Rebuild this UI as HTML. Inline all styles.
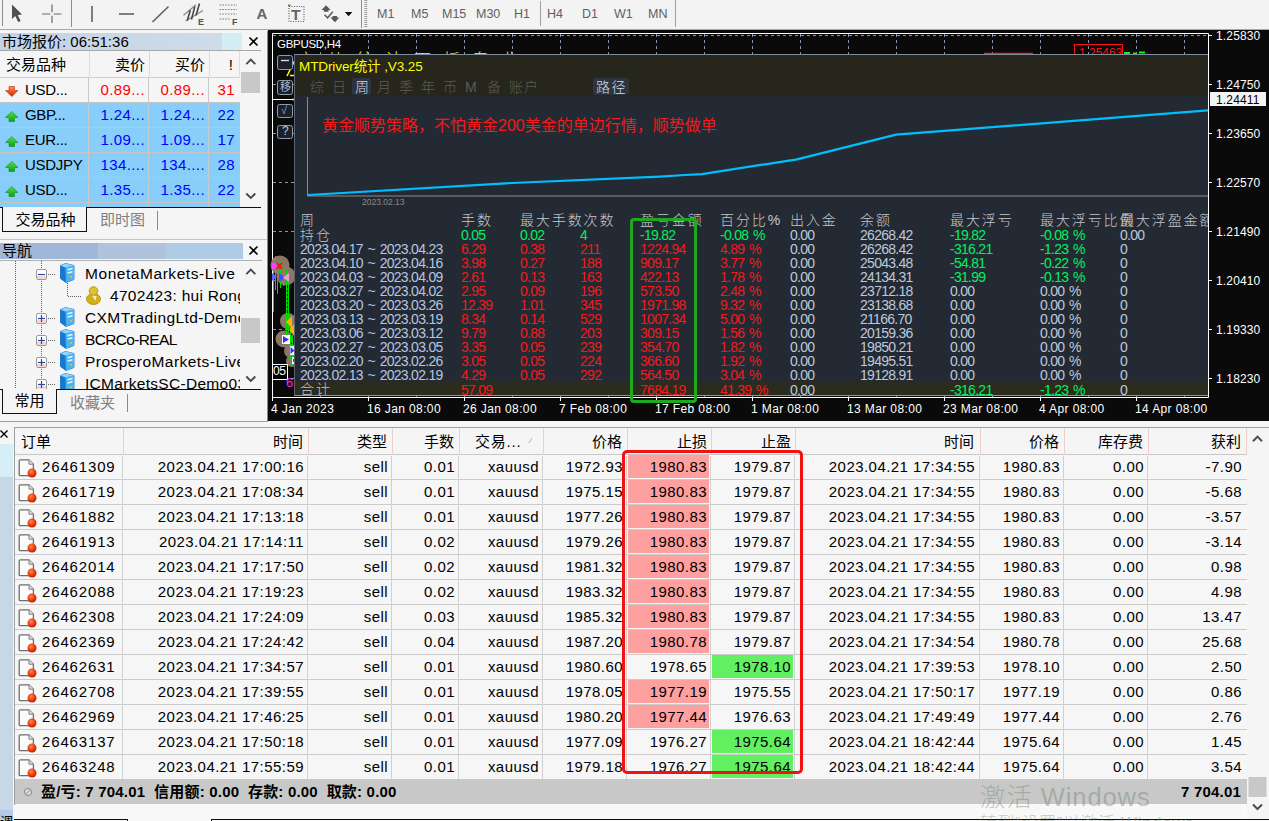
<!DOCTYPE html>
<html lang="zh-CN">
<head>
<meta charset="utf-8">
<title>MT4</title>
<style>
*{box-sizing:border-box;margin:0;padding:0}
html,body{width:1269px;height:821px;overflow:hidden;background:#f3f3f3}
body{position:relative;font-family:"Liberation Sans","Noto Sans CJK SC",sans-serif;font-size:15px;color:#000}
.abs{position:absolute}
#root{position:absolute;left:0;top:0;width:1269px;height:821px;overflow:hidden;background:#f3f3f3}
/* toolbar */
#tb{position:absolute;left:0;top:0;width:1269px;height:30px;background:#f3f3f3;border-bottom:1px solid #a8a8a8}
#tb .sep{position:absolute;top:0;width:1px;height:27px;background:#8c8c8c}
#tb .tf{position:absolute;top:6px;font-size:12.500px;color:#606060;letter-spacing:0;line-height:16px}
/* left panels */
.ptitle{position:absolute;left:0;height:17px;font-size:15px;line-height:17px;padding-left:2px;white-space:nowrap;overflow:hidden}
.px{position:absolute;font-size:17px;line-height:17px;color:#000}
/* market watch */
#mw{position:absolute;left:0;top:51px;width:240px;height:156px;background:#f5f5f5;overflow:hidden}
#mw .r{position:absolute;left:0;width:240px;height:25px;line-height:24px;white-space:nowrap;letter-spacing:.4px}
#mw .r span{position:absolute;top:0;height:25px}
#mw .hd span{font-size:15px;letter-spacing:0}
#mw .c1{left:25px;letter-spacing:-.3px}
#mw .c2{left:90px;width:59px;text-align:right;padding-right:4px}
#mw .c3{left:150px;width:59px;text-align:right;padding-right:4px}
#mw .c4{left:210px;width:30px;text-align:right;padding-right:5px}
#mw .blue{background:#87cefa;color:#0000ff}
#mw .blue .c1{color:#000}
#mw .red{color:#ff0000}
#mw .red .c1{color:#000}
#mw .vl{position:absolute;top:27px;width:1px;height:130px;background:#c8c8c8}
#mw .hl{position:absolute;left:0;width:240px;height:1px;background:#c4c4c4}
/* terminal table */
#tt{position:absolute;left:14px;top:427px;width:1233px;height:378px;background:#f6f6f6;overflow:hidden;border-left:1px solid #a0a0a0;border-top:1px solid #a0a0a0}
#tt .row{position:absolute;left:0;width:1233px;height:25px;line-height:24px;border-bottom:1px solid #cbcbcb;white-space:nowrap;letter-spacing:.45px}
#tt .row span{position:absolute;top:0;height:24px;text-align:right;padding-right:4px}
#tt .row.odd{background:#f6f6f6}
#tt .hdr{background:#f5f5f5;height:27px;line-height:26px;border-bottom:1px solid #c8c8c8;letter-spacing:0}
#tt .hdr span{top:1px}
#tt .vl{position:absolute;top:28px;width:1px;height:325px;background:#d0d0d0}
#tt .hvl{position:absolute;top:0;width:1px;height:27px;background:#f0cfc8}
</style>
</head>
<body>
<div id="root">

<!-- ============ TOOLBAR ============ -->
<div id="tb">
  <div class="sep" style="left:2px;height:26px"></div>
  <svg class="abs" style="left:0;top:0" width="375" height="29" viewBox="0 0 375 29">
    <!-- cursor -->
    <path d="M12 4.5 L12 19 L15.3 16 L18.2 22 L20.6 20.9 L17.8 15 L22 14.6 Z" fill="#505050"/>
    <!-- crosshair -->
    <path d="M52 4.5V12.3M52 15.7V23M42 14H50.3M53.7 14H61.5" stroke="#6a6a6a" stroke-width="1.2" fill="none"/>
    <!-- vline -->
    <path d="M92 6V22" stroke="#606060" stroke-width="1.6"/>
    <!-- hline -->
    <path d="M119 14H134" stroke="#606060" stroke-width="1.6"/>
    <!-- diag -->
    <path d="M152.5 22L168.5 6.5" stroke="#606060" stroke-width="1.6"/>
    <!-- channel -->
    <g fill="none">
      <path d="M183.500 15.200L196 4.800 M185.500 21L203 10.500" stroke="#8a8a8a" stroke-width="1.300"/>
      <path d="M187.300 20.500L190.300 10.200 M191.500 19.500L194.800 6.500 M196 15.500L199.500 3.500" stroke="#484848" stroke-width="1.600"/>
    </g>
    <!-- fibo -->
    <g stroke="#808080" stroke-width="1.2" stroke-dasharray="1.6 1.2" fill="none">
      <path d="M219.500 5H237 M219.500 9.500H237 M219.500 14H237 M219.500 19H231"/>
    </g>
    <!-- T box -->
    <rect x="289" y="6.5" width="15" height="15" fill="none" stroke="#606060" stroke-width="1.2" stroke-dasharray="1.1 1.4"/><rect x="288" y="4.5" width="2.5" height="2" fill="#707070"/>
    <!-- arrows icon -->
    <path d="M326 5.200L330.600 10H328.500V11.800H323.800V10H321.500Z M334.900 22.200L339.400 17.500H337V16H332.500V17.500H330.400Z" fill="#585858"/>
    <path d="M324.5 14.8L327.6 17.8L332.8 11.8" stroke="#585858" stroke-width="1.5" fill="none"/>
    <!-- dropdown -->
    <path d="M344.800 12H352.400L348.600 16.200Z" fill="#111"/>
    <!-- gripper -->
    <path d="M365.800 0V27" stroke="#9a9a9a" stroke-width="3" stroke-dasharray="1 1"/>
  </svg>
  <span class="abs" style="left:198px;top:16.500px;font-size:9px;font-weight:bold;color:#505050;line-height:10px">E</span>
  <span class="abs" style="left:232px;top:16.500px;font-size:9px;font-weight:bold;color:#505050;line-height:10px">F</span>
  <span class="abs" style="left:256.500px;top:6px;font-size:15px;font-weight:bold;color:#666;line-height:16px">A</span>
  <span class="abs" style="left:290.500px;top:7px;font-size:14.500px;font-weight:bold;color:#666;line-height:16px;transform:scaleX(1.08);transform-origin:left">T</span>
  <div class="sep" style="left:71px"></div>
  <div class="sep" style="left:361px;height:28px"></div>
  <span class="tf" style="left:377px">M1</span>
  <span class="tf" style="left:411px">M5</span>
  <span class="tf" style="left:442px">M15</span>
  <span class="tf" style="left:476px">M30</span>
  <span class="tf" style="left:514px">H1</span>
  <div class="sep" style="left:540px;top:1px;height:25px;background:#a0a0a0"></div>
  <span class="tf" style="left:547px">H4</span>
  <span class="tf" style="left:582px">D1</span>
  <span class="tf" style="left:614px">W1</span>
  <span class="tf" style="left:648px">MN</span>
  <div class="sep" style="left:675px;background:#a0a0a0"></div>
</div>


<!-- ============ MARKET WATCH ============ -->
<div class="abs" style="left:0;top:31px;width:267px;height:391px;background:#f5f5f5"></div>
<div class="ptitle" style="top:33px;width:222px;background:linear-gradient(90deg,#c3d3e4,#cfdbe8)">市场报价: 06:51:36</div>
<div class="abs" style="left:222px;top:33px;width:20px;height:17px;background:#d5eef4"></div>
<svg class="abs" style="left:248px;top:36px" width="11" height="11"><path d="M1.500 1.500L9.500 9.500M9.500 1.500L1.500 9.500" stroke="#000" stroke-width="1.6"/></svg>
<div class="abs" style="left:0;top:50px;width:261px;height:1px;background:#a8a8a8"></div>
<div id="mw">
  <div class="r hd" style="top:0;height:27px;line-height:27px"><span style="left:6px">交易品种</span><span class="c2">卖价</span><span class="c3">买价</span><span class="c4" style="padding-right:7px">!</span></div>
  <div class="r red" style="top:27px"><span class="c1">USD...</span><span class="c2">0.89...</span><span class="c3">0.89...</span><span class="c4">31</span></div>
  <div class="r blue" style="top:52px"><span class="c1">GBP...</span><span class="c2">1.24...</span><span class="c3">1.24...</span><span class="c4">22</span></div>
  <div class="r blue" style="top:77px"><span class="c1">EUR...</span><span class="c2">1.09...</span><span class="c3">1.09...</span><span class="c4">17</span></div>
  <div class="r blue" style="top:102px"><span class="c1">USDJPY</span><span class="c2">134....</span><span class="c3">134....</span><span class="c4">28</span></div>
  <div class="r blue" style="top:127px"><span class="c1">USD...</span><span class="c2">1.35...</span><span class="c3">1.35...</span><span class="c4">22</span></div>
  <div class="r blue" style="top:152px"></div>
  <div class="hl" style="top:51px"></div><div class="hl" style="top:76px"></div><div class="hl" style="top:101px"></div><div class="hl" style="top:126px"></div><div class="hl" style="top:151px"></div>
  <div class="hl" style="top:26px;background:#cfcfcf"></div>
  <div class="vl" style="left:88px"></div><div class="vl" style="left:148px"></div><div class="vl" style="left:208px"></div>
  <div class="vl" style="left:89px;top:0;height:27px;background:#f3d3cc"></div><div class="vl" style="left:149px;top:0;height:27px;background:#f3d3cc"></div><div class="vl" style="left:209px;top:0;height:27px;background:#f3d3cc"></div><div class="vl" style="left:239px;top:0;height:27px;background:#f3d3cc"></div>
  <svg class="abs" style="left:0;top:27px" width="24" height="130" viewBox="0 0 24 130">
    <defs>
      <linearGradient id="gr" x1="0" y1="0" x2="0" y2="1"><stop offset="0" stop-color="#ff8a50"/><stop offset="1" stop-color="#d02800"/></linearGradient>
      <linearGradient id="gg" x1="0" y1="0" x2="0" y2="1"><stop offset="0" stop-color="#50e050"/><stop offset="1" stop-color="#10a010"/></linearGradient>
    </defs>
    <path d="M9 8.500H14.500V12.500H18L11.800 18.500L5.500 12.500H9Z" fill="url(#gr)" stroke="#c03010" stroke-width=".6"/>
    <g fill="url(#gg)" stroke="#109010" stroke-width=".6">
      <path d="M11.800 33.5L18 39.5H14.500V43.5H9V39.5H5.500Z"/>
      <path d="M11.800 58.5L18 64.5H14.500V68.5H9V64.5H5.500Z"/>
      <path d="M11.800 83.5L18 89.5H14.500V93.5H9V89.5H5.500Z"/>
      <path d="M11.800 108.5L18 114.5H14.500V118.5H9V114.5H5.500Z"/>
    </g>
  </svg>
</div>
<!-- mw scrollbar -->
<svg class="abs" style="left:241px;top:51px" width="20" height="155" viewBox="0 0 20 155">
  <path d="M5.300 13.200L9.800 8.700L14.300 13.200" stroke="#484850" stroke-width="1.900" fill="none"/>
  <rect x="0" y="21" width="19" height="21" fill="#c8c8c8"/>
  <path d="M5.300 142.500L9.800 147L14.300 142.500" stroke="#484850" stroke-width="1.900" fill="none"/>
</svg>
<!-- mw tabs -->
<div class="abs" style="left:0;top:207px;width:261px;height:1px;background:#101010"></div>
<div class="abs" style="left:2px;top:207px;width:85px;height:25px;border:1px solid #101010;border-top:none;background:#f5f5f5;font-size:15px;line-height:25px;text-align:center;padding-left:2px">交易品种</div>
<div class="abs" style="left:100px;top:208px;font-size:15px;line-height:24px;color:#808080">即时图</div>
<div class="abs" style="left:157px;top:211px;width:1px;height:19px;background:#8a8a8a"></div>
<div class="abs" style="left:0;top:239px;width:267px;height:1px;background:#c6c6c6"></div>

<!-- ============ NAVIGATOR ============ -->
<div class="ptitle" style="top:243px;width:98px;height:16px;line-height:16px;background:#9fb8d8">导航</div>
<div class="abs" style="left:98px;top:243px;width:68px;height:16px;background:#afc3dd"></div>
<div class="abs" style="left:166px;top:243px;width:77px;height:16px;background:#b0cbe6"></div>
<svg class="abs" style="left:248px;top:245px" width="11" height="11"><path d="M1.500 1.500L9.500 9.500M9.500 1.500L1.500 9.500" stroke="#000" stroke-width="1.6"/></svg>
<div class="abs" style="left:0;top:260px;width:262px;height:1px;background:#b0b0b0"></div>
<div id="nav" class="abs" style="left:0;top:261px;width:240px;height:128px;overflow:hidden;background:#f5f5f5">
<svg class="abs" style="left:0;top:0" width="241" height="128" viewBox="0 0 241 128"><g stroke="#606060" stroke-width="1" stroke-dasharray="1 1" fill="none"><path d="M15.500 0V128"/><path d="M41.500 0V128"/><path d="M48 13.5H56"/><path d="M48 57.5H56"/><path d="M48 79.5H56"/><path d="M48 101.5H56"/><path d="M48 123.5H56"/><path d="M67.500 22V35.500H82"/></g><rect x="36.5" y="8.5" width="10" height="10" rx="1.500" fill="#fff" stroke="#9a9a9a" stroke-width="1"/><rect x="37.0" y="15.0" width="9" height="3" fill="#f6d4d0"/><path d="M38 13.5H45" stroke="#2848a0" stroke-width="1.200"/><g transform="translate(60,2)">
<path d="M0.500 2.500L5.500 0.500L14 2.500L14 16.500L6 19.500L0.500 15.500Z" fill="#2a8fe0" stroke="#1a6fc0" stroke-width=".8"/>
<path d="M0.500 2.500L5.500 4.500L6 19.500L0.500 15.500Z" fill="#1878d0"/>
<path d="M5.500 4.500L14 2.500L14 16.500L6 19.500Z" fill="#45b5f5"/>
<path d="M0.500 2.500L5.500 0.500L14 2.500L5.500 4.500Z" fill="#8fd4fa"/>
<path d="M7.500 6.800L12.500 5.600M7.500 10L12.500 8.800" stroke="#e8f6ff" stroke-width="1.500"/>
<rect x="10" y="13" width="1.800" height="1.800" fill="#f0c020"/>
</g><rect x="36.5" y="52.5" width="10" height="10" rx="1.500" fill="#fff" stroke="#9a9a9a" stroke-width="1"/><rect x="37.0" y="59.0" width="9" height="3" fill="#f6d4d0"/><path d="M38 57.5H45" stroke="#2848a0" stroke-width="1.200"/><path d="M41.5 54V61" stroke="#2848a0" stroke-width="1.200"/><g transform="translate(60,46)">
<path d="M0.500 2.500L5.500 0.500L14 2.500L14 16.500L6 19.500L0.500 15.500Z" fill="#2a8fe0" stroke="#1a6fc0" stroke-width=".8"/>
<path d="M0.500 2.500L5.500 4.500L6 19.500L0.500 15.500Z" fill="#1878d0"/>
<path d="M5.500 4.500L14 2.500L14 16.500L6 19.500Z" fill="#45b5f5"/>
<path d="M0.500 2.500L5.500 0.500L14 2.500L5.500 4.500Z" fill="#8fd4fa"/>
<path d="M7.500 6.800L12.500 5.600M7.500 10L12.500 8.800" stroke="#e8f6ff" stroke-width="1.500"/>
<rect x="10" y="13" width="1.800" height="1.800" fill="#f0c020"/>
</g><rect x="36.5" y="74.5" width="10" height="10" rx="1.500" fill="#fff" stroke="#9a9a9a" stroke-width="1"/><rect x="37.0" y="81.0" width="9" height="3" fill="#f6d4d0"/><path d="M38 79.5H45" stroke="#2848a0" stroke-width="1.200"/><path d="M41.5 76V83" stroke="#2848a0" stroke-width="1.200"/><g transform="translate(60,68)">
<path d="M0.500 2.500L5.500 0.500L14 2.500L14 16.500L6 19.500L0.500 15.500Z" fill="#2a8fe0" stroke="#1a6fc0" stroke-width=".8"/>
<path d="M0.500 2.500L5.500 4.500L6 19.500L0.500 15.500Z" fill="#1878d0"/>
<path d="M5.500 4.500L14 2.500L14 16.500L6 19.500Z" fill="#45b5f5"/>
<path d="M0.500 2.500L5.500 0.500L14 2.500L5.500 4.500Z" fill="#8fd4fa"/>
<path d="M7.500 6.800L12.500 5.600M7.500 10L12.500 8.800" stroke="#e8f6ff" stroke-width="1.500"/>
<rect x="10" y="13" width="1.800" height="1.800" fill="#f0c020"/>
</g><rect x="36.5" y="96.5" width="10" height="10" rx="1.500" fill="#fff" stroke="#9a9a9a" stroke-width="1"/><rect x="37.0" y="103.0" width="9" height="3" fill="#f6d4d0"/><path d="M38 101.5H45" stroke="#2848a0" stroke-width="1.200"/><path d="M41.5 98V105" stroke="#2848a0" stroke-width="1.200"/><g transform="translate(60,90)">
<path d="M0.500 2.500L5.500 0.500L14 2.500L14 16.500L6 19.500L0.500 15.500Z" fill="#2a8fe0" stroke="#1a6fc0" stroke-width=".8"/>
<path d="M0.500 2.500L5.500 4.500L6 19.500L0.500 15.500Z" fill="#1878d0"/>
<path d="M5.500 4.500L14 2.500L14 16.500L6 19.500Z" fill="#45b5f5"/>
<path d="M0.500 2.500L5.500 0.500L14 2.500L5.500 4.500Z" fill="#8fd4fa"/>
<path d="M7.500 6.800L12.500 5.600M7.500 10L12.500 8.800" stroke="#e8f6ff" stroke-width="1.500"/>
<rect x="10" y="13" width="1.800" height="1.800" fill="#f0c020"/>
</g><rect x="36.5" y="118.5" width="10" height="10" rx="1.500" fill="#fff" stroke="#9a9a9a" stroke-width="1"/><rect x="37.0" y="125.0" width="9" height="3" fill="#f6d4d0"/><path d="M38 123.5H45" stroke="#2848a0" stroke-width="1.200"/><path d="M41.5 120V127" stroke="#2848a0" stroke-width="1.200"/><g transform="translate(60,112)">
<path d="M0.500 2.500L5.500 0.500L14 2.500L14 16.500L6 19.500L0.500 15.500Z" fill="#2a8fe0" stroke="#1a6fc0" stroke-width=".8"/>
<path d="M0.500 2.500L5.500 4.500L6 19.500L0.500 15.500Z" fill="#1878d0"/>
<path d="M5.500 4.500L14 2.500L14 16.500L6 19.500Z" fill="#45b5f5"/>
<path d="M0.500 2.500L5.500 0.500L14 2.500L5.500 4.500Z" fill="#8fd4fa"/>
<path d="M7.500 6.800L12.500 5.600M7.500 10L12.500 8.800" stroke="#e8f6ff" stroke-width="1.500"/>
<rect x="10" y="13" width="1.800" height="1.800" fill="#f0c020"/>
</g><g transform="translate(86,25)">
<ellipse cx="7.500" cy="13" rx="7" ry="5.500" fill="#d4b018" stroke="#a88a08" stroke-width=".8"/>
<circle cx="7.500" cy="5" r="4.300" fill="#e0c030" stroke="#a88a08" stroke-width=".8"/>
<path d="M6 9.500L9.500 15L10.500 10Z" fill="#f4ecd0"/>
</g></svg><div class="abs" style="left:85px;top:2px;height:22px;line-height:22px;font-size:15.500px;letter-spacing:.55px;white-space:nowrap">MonetaMarkets-Live</div><div class="abs" style="left:110px;top:24px;height:22px;line-height:22px;font-size:15.500px;letter-spacing:.3px;white-space:nowrap">4702423: hui Rong</div><div class="abs" style="left:85px;top:46px;height:22px;line-height:22px;font-size:15.500px;letter-spacing:.4px;white-space:nowrap">CXMTradingLtd-Demo</div><div class="abs" style="left:85px;top:68px;height:22px;line-height:22px;font-size:15.500px;letter-spacing:-.65px;white-space:nowrap">BCRCo-REAL</div><div class="abs" style="left:85px;top:90px;height:22px;line-height:22px;font-size:15.500px;letter-spacing:.45px;white-space:nowrap">ProsperoMarkets-Live</div><div class="abs" style="left:85px;top:112px;height:22px;line-height:22px;font-size:15.500px;letter-spacing:.3px;white-space:nowrap">ICMarketsSC-Demo03</div>
</div>
<svg class="abs" style="left:241px;top:261px" width="20" height="128" viewBox="0 0 20 128">
  <path d="M5.300 13.200L9.800 8.700L14.300 13.200" stroke="#484850" stroke-width="1.900" fill="none"/>
  <rect x="0" y="57" width="19" height="25" fill="#c8c8c8"/>
  <path d="M5.300 115.500L9.800 120L14.300 115.500" stroke="#484850" stroke-width="1.900" fill="none"/>
</svg>
<div class="abs" style="left:0;top:389px;width:261px;height:1px;background:#101010"></div>
<div class="abs" style="left:2px;top:389px;width:55px;height:25px;border:1px solid #101010;border-top:none;background:#f5f5f5;font-size:15px;line-height:24px;text-align:center">常用</div>
<div class="abs" style="left:70px;top:391px;font-size:15px;line-height:23px;color:#808080">收藏夹</div>
<div class="abs" style="left:127px;top:394px;width:1px;height:18px;background:#8a8a8a"></div>
<div class="abs" style="left:0;top:421px;width:268px;height:1px;background:#a0a0a0"></div>
<div class="abs" style="left:267px;top:31px;width:1px;height:390px;background:#8a8a8a"></div>

<!--LEFT-->
<div id="ch" class="abs" style="left:268px;top:30px;width:1001px;height:391px;background:#0a0a0a;overflow:hidden;font-family:'Liberation Sans','Noto Sans CJK SC',sans-serif">
<svg class="abs" style="left:0;top:0" width="1001" height="391" viewBox="268 30 1001 391"><g stroke="#8496a8" stroke-width="1" stroke-dasharray="3 3" fill="none"><path d="M320.5 34V397"/><path d="M368.5 34V397"/><path d="M416.5 34V397"/><path d="M464.5 34V397"/><path d="M512.5 34V397"/><path d="M560.5 34V397"/><path d="M608.5 34V397"/><path d="M656.5 34V397"/><path d="M704.5 34V397"/><path d="M752.5 34V397"/><path d="M800.5 34V397"/><path d="M848.5 34V397"/><path d="M896.5 34V397"/><path d="M944.5 34V397"/><path d="M992.5 34V397"/><path d="M1040.5 34V397"/><path d="M1088.5 34V397"/><path d="M1136.5 34V397"/><path d="M1184.5 34V397"/><path d="M273 35.5H1208"/><path d="M273 84.5H1208"/><path d="M273 133.5H1208"/><path d="M273 182.5H1208"/><path d="M273 231.5H1208"/><path d="M273 280.5H1208"/><path d="M273 329.5H1208"/><path d="M273 378.5H1208"/></g><path d="M272.5 33.5H1208.5V397.5H272.5Z" fill="none" stroke="#fff" stroke-width="1"/><g stroke="#fff" stroke-width="1"><path d="M1208 35.5H1212"/><path d="M1208 84.5H1212"/><path d="M1208 133.5H1212"/><path d="M1208 182.5H1212"/><path d="M1208 231.5H1212"/><path d="M1208 280.5H1212"/><path d="M1208 329.5H1212"/><path d="M1208 378.5H1212"/><path d="M272.5 397V401"/><path d="M368.5 397V401"/><path d="M464.5 397V401"/><path d="M560.5 397V401"/><path d="M656.5 397V401"/><path d="M752.5 397V401"/><path d="M848.5 397V401"/><path d="M944.5 397V401"/><path d="M1040.5 397V401"/><path d="M1136.5 397V401"/></g><path d="M272 99.500H294" stroke="#fff" stroke-width="1"/><path d="M290 75.500H300M292 99.500H300" stroke="#ffff00" stroke-width="1.500"/><path d="M287 76L296 58" stroke="#ffff00" stroke-width="1.500"/><g fill="#8a7866"><circle cx="280" cy="265" r="9.500"/><circle cx="286" cy="276" r="9.500"/><circle cx="288" cy="321" r="8"/><circle cx="284" cy="339" r="8.500"/><circle cx="291" cy="351" r="7"/><circle cx="292" cy="361" r="6"/></g><g stroke="#00e000" stroke-width="1"><path d="M273.500 258V312M275.500 256V290M277.500 262V294M280.500 262V288M283.500 268V286M286.500 270V335M288.500 280V332M290.500 325V360M292.500 335V365"/></g><path d="M287.500 288V312" stroke="#4040ff" stroke-width="1" stroke-dasharray="2 2"/><path d="M272 262L278 266L272 270Z" fill="#ff40ff"/><path d="M276 261L279 264L283 262L281 266L283 270L279 268L276 270L277.500 266Z" fill="#ff1010"/><path d="M279 273L285 277.500L279 282Z" fill="#4848ff"/><path d="M289 273L283 277.500L289 282Z" fill="#ff90e0"/><path d="M272 273L277 277L272 281Z" fill="#6060ff"/><path d="M292 316L286 322L292 328Z" fill="#ffb000"/><path d="M294 324L289 330L294 336Z" fill="#ffb000"/><rect x="282" y="335" width="8" height="9" fill="#fff"/><path d="M283 336L289 339.500L283 343Z" fill="#3030ff"/><rect x="290" y="346" width="5" height="9" fill="#fff"/><path d="M290.500 347L294.500 350.500L290.500 354Z" fill="#3030ff"/><rect x="292" y="357" width="3" height="7" fill="#fff"/><rect x="293" y="359" width="2" height="3" fill="#f00"/><rect x="272.500" y="364.500" width="15" height="15" fill="#000" stroke="#fff" stroke-width="1"/><path d="M984 53.500H1033" stroke="#ff2020" stroke-width="1.500"/><rect x="1074.500" y="44.500" width="48" height="14" fill="none" stroke="#ff1010" stroke-width="1"/><path d="M1124 53H1130M1133 53.500H1137M1139 52.500H1145" stroke="#00ff00" stroke-width="2"/><rect x="277.500" y="55.5" width="15" height="14" rx="2" fill="#1c2028" stroke="#8e9cb0" stroke-width="1"/><rect x="277.500" y="80.5" width="15" height="14" rx="2" fill="#1c2028" stroke="#8e9cb0" stroke-width="1"/><rect x="277.500" y="104.5" width="15" height="13" rx="2" fill="#1c2028" stroke="#8e9cb0" stroke-width="1"/><rect x="277.500" y="125.5" width="15" height="13" rx="2" fill="#1c2028" stroke="#8e9cb0" stroke-width="1"/><path d="M281 60.500H289" stroke="#e0e4ea" stroke-width="1.300"/></svg>
<span class="abs" style="left:9px;top:5px;white-space:nowrap;font-size:11.500px;line-height:14px;color:#fff;margin-top:1.500px;letter-spacing:-.3px">GBPUSD,H4</span>
<span class="abs" style="left:9px;top:333px;white-space:nowrap;left:5px;font-size:12px;line-height:17px;color:#fff;letter-spacing:-.3px">05</span>
<span class="abs" style="left:18px;top:346px;white-space:nowrap;font-size:13px;line-height:14px;color:#ff20ff">6</span>
<span class="abs" style="left:811px;top:16px;white-space:nowrap;font-size:12px;line-height:14px;color:#ff1010">1.25463</span>
<span class="abs" style="left:12px;top:50px;white-space:nowrap;font-size:11px;line-height:14px;color:#b4bece">移</span>
<span class="abs" style="left:13px;top:73px;white-space:nowrap;font-size:11px;line-height:14px;color:#8fa0d0">√</span>
<span class="abs" style="left:14px;top:94px;white-space:nowrap;font-size:12px;line-height:14px;color:#c4ccd8">?</span>
<span class="abs" style="left:948px;top:-1px;white-space:nowrap;font-size:12px;line-height:14px;color:#fff;letter-spacing:.15px">1.25830</span>
<span class="abs" style="left:948px;top:48px;white-space:nowrap;font-size:12px;line-height:14px;color:#fff;letter-spacing:.15px">1.24750</span>
<span class="abs" style="left:948px;top:97px;white-space:nowrap;font-size:12px;line-height:14px;color:#fff;letter-spacing:.15px">1.23650</span>
<span class="abs" style="left:948px;top:146px;white-space:nowrap;font-size:12px;line-height:14px;color:#fff;letter-spacing:.15px">1.22570</span>
<span class="abs" style="left:948px;top:195px;white-space:nowrap;font-size:12px;line-height:14px;color:#fff;letter-spacing:.15px">1.21490</span>
<span class="abs" style="left:948px;top:244px;white-space:nowrap;font-size:12px;line-height:14px;color:#fff;letter-spacing:.15px">1.20410</span>
<span class="abs" style="left:948px;top:293px;white-space:nowrap;font-size:12px;line-height:14px;color:#fff;letter-spacing:.15px">1.19330</span>
<span class="abs" style="left:948px;top:342px;white-space:nowrap;font-size:12px;line-height:14px;color:#fff;letter-spacing:.15px">1.18230</span>
<div class="abs" style="left:942px;top:62px;width:56px;height:14px;background:#f4f4f4;color:#000;font-size:12px;line-height:14px;padding-left:6px;letter-spacing:.15px;padding-top:1px">1.24411</div>
<span class="abs" style="left:3px;top:371px;white-space:nowrap;font-size:12px;line-height:14px;color:#fff;letter-spacing:.38px;margin-top:1px">4 Jan 2023</span>
<span class="abs" style="left:99px;top:371px;white-space:nowrap;font-size:12px;line-height:14px;color:#fff;letter-spacing:.38px;margin-top:1px">16 Jan 08:00</span>
<span class="abs" style="left:195px;top:371px;white-space:nowrap;font-size:12px;line-height:14px;color:#fff;letter-spacing:.38px;margin-top:1px">26 Jan 08:00</span>
<span class="abs" style="left:291px;top:371px;white-space:nowrap;font-size:12px;line-height:14px;color:#fff;letter-spacing:.38px;margin-top:1px">7 Feb 08:00</span>
<span class="abs" style="left:387px;top:371px;white-space:nowrap;font-size:12px;line-height:14px;color:#fff;letter-spacing:.38px;margin-top:1px">17 Feb 08:00</span>
<span class="abs" style="left:483px;top:371px;white-space:nowrap;font-size:12px;line-height:14px;color:#fff;letter-spacing:.38px;margin-top:1px">1 Mar 08:00</span>
<span class="abs" style="left:579px;top:371px;white-space:nowrap;font-size:12px;line-height:14px;color:#fff;letter-spacing:.38px;margin-top:1px">13 Mar 08:00</span>
<span class="abs" style="left:675px;top:371px;white-space:nowrap;font-size:12px;line-height:14px;color:#fff;letter-spacing:.38px;margin-top:1px">23 Mar 08:00</span>
<span class="abs" style="left:771px;top:371px;white-space:nowrap;font-size:12px;line-height:14px;color:#fff;letter-spacing:.38px;margin-top:1px">4 Apr 08:00</span>
<span class="abs" style="left:867px;top:371px;white-space:nowrap;font-size:12px;line-height:14px;color:#fff;letter-spacing:.38px;margin-top:1px">14 Apr 08:00</span>
<span class="abs" style="left:30px;top:20.800px;font-size:17px;line-height:20px;color:#ffff00;white-space:nowrap;letter-spacing:12px;font-weight:300">六儿统计面板专业</span>
<div id="pn" class="abs" style="left:26px;top:24px;width:914px;height:342px;background:#242a33;border-top:1px solid #7f8c9c;border-left:1px solid #5a6472;border-bottom:1px solid #8a96a6;overflow:hidden">
<div class="abs" style="left:0;top:0;width:914px;height:41px;background:#26261d"></div>
<div class="abs" style="left:0;top:326px;width:914px;height:14px;background:#2b2b1e"></div>
<span class="abs" style="left:4px;top:2px;white-space:nowrap;font-size:13.500px;line-height:17px;color:#ffff00;margin-top:1px;letter-spacing:-.1px">MTDriver统计 ,V3.25</span>
<span class="abs" style="left:15px;top:23px;white-space:nowrap;font-size:14px;line-height:17px;color:#5c5c56;font-weight:300;letter-spacing:1px;margin-top:1px">综</span>
<span class="abs" style="left:37px;top:23px;white-space:nowrap;font-size:14px;line-height:17px;color:#5c5c56;font-weight:300;letter-spacing:1px;margin-top:1px">日</span>
<span class="abs" style="left:57px;top:23px;width:19px;height:17px;background:#2c3440;border-radius:2px"></span>
<span class="abs" style="left:60px;top:23px;white-space:nowrap;font-size:14px;line-height:17px;color:#d4dce6;font-weight:300;margin-top:1px">周</span>
<span class="abs" style="left:82px;top:23px;white-space:nowrap;font-size:14px;line-height:17px;color:#5c5c56;font-weight:300;letter-spacing:1px;margin-top:1px">月</span>
<span class="abs" style="left:104px;top:23px;white-space:nowrap;font-size:14px;line-height:17px;color:#5c5c56;font-weight:300;letter-spacing:1px;margin-top:1px">季</span>
<span class="abs" style="left:126px;top:23px;white-space:nowrap;font-size:14px;line-height:17px;color:#5c5c56;font-weight:300;letter-spacing:1px;margin-top:1px">年</span>
<span class="abs" style="left:148px;top:23px;white-space:nowrap;font-size:14px;line-height:17px;color:#5c5c56;font-weight:300;letter-spacing:1px;margin-top:1px">币</span>
<span class="abs" style="left:170px;top:23px;white-space:nowrap;font-size:14px;line-height:17px;color:#5c5c56;font-weight:300;letter-spacing:1px;margin-top:1px">M</span>
<span class="abs" style="left:192px;top:23px;white-space:nowrap;font-size:14px;line-height:17px;color:#5c5c56;font-weight:300;letter-spacing:1px;margin-top:1px">备</span>
<span class="abs" style="left:214px;top:23px;white-space:nowrap;font-size:14px;line-height:17px;color:#5c5c56;font-weight:300;letter-spacing:1px;margin-top:1px">账户</span>
<span class="abs" style="left:298px;top:23px;width:36px;height:17px;background:#2c3440;border-radius:2px"></span>
<span class="abs" style="left:301px;top:23px;white-space:nowrap;font-size:14px;line-height:17px;color:#d4dce6;font-weight:300;letter-spacing:1.500px;margin-top:1px">路径</span>
<span class="abs" style="left:27px;top:59px;white-space:nowrap;font-size:16px;line-height:20px;color:#f21a1a;margin-top:2px">黄金顺势策略，不怕黄金200美金的单边行情，顺势做单</span>
<span class="abs" style="left:67px;top:142px;white-space:nowrap;font-size:8.500px;line-height:11px;color:#8a8a8a">2023.02.13</span>
<svg class="abs" style="left:0;top:0" width="914" height="342" viewBox="295 55 914 342"><path d="M307.500 97V196H1209" fill="none" stroke="#8a8a8a" stroke-width="1"/><path d="M308 195L512 183L660 176.600L685 175L702 174.200L797 159.300L896 134.700L1209 110.300" fill="none" stroke="#00bfff" stroke-width="2.200"/></svg>
<span class="abs" style="left:5px;top:157px;white-space:nowrap;font-size:14px;line-height:16px;color:#c4c8cc;font-weight:300;letter-spacing:1.900px">周</span>
<span class="abs" style="left:166px;top:157px;white-space:nowrap;font-size:14px;line-height:16px;color:#c4c8cc;font-weight:300;letter-spacing:1.900px">手数</span>
<span class="abs" style="left:225px;top:157px;white-space:nowrap;font-size:14px;line-height:16px;color:#c4c8cc;font-weight:300;letter-spacing:1.900px">最大手数次数</span>
<span class="abs" style="left:345px;top:157px;white-space:nowrap;font-size:14px;line-height:16px;color:#c4c8cc;font-weight:300;letter-spacing:1.900px">盈亏金额</span>
<span class="abs" style="left:425px;top:157px;white-space:nowrap;font-size:14px;line-height:16px;color:#c4c8cc;font-weight:300;letter-spacing:1.900px">百分比%</span>
<span class="abs" style="left:495px;top:157px;white-space:nowrap;font-size:14px;line-height:16px;color:#c4c8cc;font-weight:300;letter-spacing:1.900px">出入金</span>
<span class="abs" style="left:565px;top:157px;white-space:nowrap;font-size:14px;line-height:16px;color:#c4c8cc;font-weight:300;letter-spacing:1.900px">余额</span>
<span class="abs" style="left:655px;top:157px;white-space:nowrap;font-size:14px;line-height:16px;color:#c4c8cc;font-weight:300;letter-spacing:1.900px">最大浮亏</span>
<span class="abs" style="left:745px;top:157px;white-space:nowrap;font-size:14px;line-height:16px;color:#c4c8cc;font-weight:300;letter-spacing:1.900px">最大浮亏比例</span>
<span class="abs" style="left:825px;top:157px;white-space:nowrap;font-size:14px;line-height:16px;color:#c4c8cc;font-weight:300;letter-spacing:1.900px">最大浮盈金额</span>
<span class="abs" style="left:5px;top:172px;white-space:nowrap;font-size:14px;line-height:14px;letter-spacing:-.72px;word-spacing:1.500px;margin-top:.5px;font-size:14px;line-height:16px;color:#c4c8cc;font-weight:300;letter-spacing:1.900px;top:171px">持仓</span>
<span class="abs" style="left:166px;top:172px;white-space:nowrap;font-size:14px;line-height:14px;letter-spacing:-.72px;word-spacing:1.500px;margin-top:.5px;color:#00f060">0.05</span>
<span class="abs" style="left:225px;top:172px;white-space:nowrap;font-size:14px;line-height:14px;letter-spacing:-.72px;word-spacing:1.500px;margin-top:.5px;color:#00f060">0.02</span>
<span class="abs" style="left:285px;top:172px;white-space:nowrap;font-size:14px;line-height:14px;letter-spacing:-.72px;word-spacing:1.500px;margin-top:.5px;color:#00f060">4</span>
<span class="abs" style="left:345px;top:172px;white-space:nowrap;font-size:14px;line-height:14px;letter-spacing:-.72px;word-spacing:1.500px;margin-top:.5px;color:#00f060">-19.82</span>
<span class="abs" style="left:425px;top:172px;white-space:nowrap;font-size:14px;line-height:14px;letter-spacing:-.72px;word-spacing:1.500px;margin-top:.5px;color:#00f060">-0.08 %</span>
<span class="abs" style="left:495px;top:172px;white-space:nowrap;font-size:14px;line-height:14px;letter-spacing:-.72px;word-spacing:1.500px;margin-top:.5px;color:#bcc8dc">0.00</span>
<span class="abs" style="left:565px;top:172px;white-space:nowrap;font-size:14px;line-height:14px;letter-spacing:-.72px;word-spacing:1.500px;margin-top:.5px;color:#bcc8dc">26268.42</span>
<span class="abs" style="left:655px;top:172px;white-space:nowrap;font-size:14px;line-height:14px;letter-spacing:-.72px;word-spacing:1.500px;margin-top:.5px;color:#00f060">-19.82</span>
<span class="abs" style="left:745px;top:172px;white-space:nowrap;font-size:14px;line-height:14px;letter-spacing:-.72px;word-spacing:1.500px;margin-top:.5px;color:#00f060">-0.08 %</span>
<span class="abs" style="left:825px;top:172px;white-space:nowrap;font-size:14px;line-height:14px;letter-spacing:-.72px;word-spacing:1.500px;margin-top:.5px;color:#bcc8dc">0.00</span>
<span class="abs" style="left:5px;top:186px;white-space:nowrap;font-size:14px;line-height:14px;letter-spacing:-.72px;word-spacing:1.500px;margin-top:.5px;color:#b4c6e0">2023.04.17 ~ 2023.04.23</span>
<span class="abs" style="left:166px;top:186px;white-space:nowrap;font-size:14px;line-height:14px;letter-spacing:-.72px;word-spacing:1.500px;margin-top:.5px;color:#f21a1a">6.29</span>
<span class="abs" style="left:225px;top:186px;white-space:nowrap;font-size:14px;line-height:14px;letter-spacing:-.72px;word-spacing:1.500px;margin-top:.5px;color:#f21a1a">0.38</span>
<span class="abs" style="left:285px;top:186px;white-space:nowrap;font-size:14px;line-height:14px;letter-spacing:-.72px;word-spacing:1.500px;margin-top:.5px;color:#f21a1a">211</span>
<span class="abs" style="left:345px;top:186px;white-space:nowrap;font-size:14px;line-height:14px;letter-spacing:-.72px;word-spacing:1.500px;margin-top:.5px;color:#f21a1a">1224.94</span>
<span class="abs" style="left:425px;top:186px;white-space:nowrap;font-size:14px;line-height:14px;letter-spacing:-.72px;word-spacing:1.500px;margin-top:.5px;color:#f21a1a">4.89 %</span>
<span class="abs" style="left:495px;top:186px;white-space:nowrap;font-size:14px;line-height:14px;letter-spacing:-.72px;word-spacing:1.500px;margin-top:.5px;color:#bcc8dc">0.00</span>
<span class="abs" style="left:565px;top:186px;white-space:nowrap;font-size:14px;line-height:14px;letter-spacing:-.72px;word-spacing:1.500px;margin-top:.5px;color:#bcc8dc">26268.42</span>
<span class="abs" style="left:655px;top:186px;white-space:nowrap;font-size:14px;line-height:14px;letter-spacing:-.72px;word-spacing:1.500px;margin-top:.5px;color:#00f060">-316.21</span>
<span class="abs" style="left:745px;top:186px;white-space:nowrap;font-size:14px;line-height:14px;letter-spacing:-.72px;word-spacing:1.500px;margin-top:.5px;color:#00f060">-1.23 %</span>
<span class="abs" style="left:825px;top:186px;white-space:nowrap;font-size:14px;line-height:14px;letter-spacing:-.72px;word-spacing:1.500px;margin-top:.5px;color:#bcc8dc">0</span>
<span class="abs" style="left:5px;top:200px;white-space:nowrap;font-size:14px;line-height:14px;letter-spacing:-.72px;word-spacing:1.500px;margin-top:.5px;color:#b4c6e0">2023.04.10 ~ 2023.04.16</span>
<span class="abs" style="left:166px;top:200px;white-space:nowrap;font-size:14px;line-height:14px;letter-spacing:-.72px;word-spacing:1.500px;margin-top:.5px;color:#f21a1a">3.98</span>
<span class="abs" style="left:225px;top:200px;white-space:nowrap;font-size:14px;line-height:14px;letter-spacing:-.72px;word-spacing:1.500px;margin-top:.5px;color:#f21a1a">0.27</span>
<span class="abs" style="left:285px;top:200px;white-space:nowrap;font-size:14px;line-height:14px;letter-spacing:-.72px;word-spacing:1.500px;margin-top:.5px;color:#f21a1a">188</span>
<span class="abs" style="left:345px;top:200px;white-space:nowrap;font-size:14px;line-height:14px;letter-spacing:-.72px;word-spacing:1.500px;margin-top:.5px;color:#f21a1a">909.17</span>
<span class="abs" style="left:425px;top:200px;white-space:nowrap;font-size:14px;line-height:14px;letter-spacing:-.72px;word-spacing:1.500px;margin-top:.5px;color:#f21a1a">3.77 %</span>
<span class="abs" style="left:495px;top:200px;white-space:nowrap;font-size:14px;line-height:14px;letter-spacing:-.72px;word-spacing:1.500px;margin-top:.5px;color:#bcc8dc">0.00</span>
<span class="abs" style="left:565px;top:200px;white-space:nowrap;font-size:14px;line-height:14px;letter-spacing:-.72px;word-spacing:1.500px;margin-top:.5px;color:#bcc8dc">25043.48</span>
<span class="abs" style="left:655px;top:200px;white-space:nowrap;font-size:14px;line-height:14px;letter-spacing:-.72px;word-spacing:1.500px;margin-top:.5px;color:#00f060">-54.81</span>
<span class="abs" style="left:745px;top:200px;white-space:nowrap;font-size:14px;line-height:14px;letter-spacing:-.72px;word-spacing:1.500px;margin-top:.5px;color:#00f060">-0.22 %</span>
<span class="abs" style="left:825px;top:200px;white-space:nowrap;font-size:14px;line-height:14px;letter-spacing:-.72px;word-spacing:1.500px;margin-top:.5px;color:#bcc8dc">0</span>
<span class="abs" style="left:5px;top:214px;white-space:nowrap;font-size:14px;line-height:14px;letter-spacing:-.72px;word-spacing:1.500px;margin-top:.5px;color:#b4c6e0">2023.04.03 ~ 2023.04.09</span>
<span class="abs" style="left:166px;top:214px;white-space:nowrap;font-size:14px;line-height:14px;letter-spacing:-.72px;word-spacing:1.500px;margin-top:.5px;color:#f21a1a">2.61</span>
<span class="abs" style="left:225px;top:214px;white-space:nowrap;font-size:14px;line-height:14px;letter-spacing:-.72px;word-spacing:1.500px;margin-top:.5px;color:#f21a1a">0.13</span>
<span class="abs" style="left:285px;top:214px;white-space:nowrap;font-size:14px;line-height:14px;letter-spacing:-.72px;word-spacing:1.500px;margin-top:.5px;color:#f21a1a">163</span>
<span class="abs" style="left:345px;top:214px;white-space:nowrap;font-size:14px;line-height:14px;letter-spacing:-.72px;word-spacing:1.500px;margin-top:.5px;color:#f21a1a">422.13</span>
<span class="abs" style="left:425px;top:214px;white-space:nowrap;font-size:14px;line-height:14px;letter-spacing:-.72px;word-spacing:1.500px;margin-top:.5px;color:#f21a1a">1.78 %</span>
<span class="abs" style="left:495px;top:214px;white-space:nowrap;font-size:14px;line-height:14px;letter-spacing:-.72px;word-spacing:1.500px;margin-top:.5px;color:#bcc8dc">0.00</span>
<span class="abs" style="left:565px;top:214px;white-space:nowrap;font-size:14px;line-height:14px;letter-spacing:-.72px;word-spacing:1.500px;margin-top:.5px;color:#bcc8dc">24134.31</span>
<span class="abs" style="left:655px;top:214px;white-space:nowrap;font-size:14px;line-height:14px;letter-spacing:-.72px;word-spacing:1.500px;margin-top:.5px;color:#00f060">-31.99</span>
<span class="abs" style="left:745px;top:214px;white-space:nowrap;font-size:14px;line-height:14px;letter-spacing:-.72px;word-spacing:1.500px;margin-top:.5px;color:#00f060">-0.13 %</span>
<span class="abs" style="left:825px;top:214px;white-space:nowrap;font-size:14px;line-height:14px;letter-spacing:-.72px;word-spacing:1.500px;margin-top:.5px;color:#bcc8dc">0</span>
<span class="abs" style="left:5px;top:228px;white-space:nowrap;font-size:14px;line-height:14px;letter-spacing:-.72px;word-spacing:1.500px;margin-top:.5px;color:#b4c6e0">2023.03.27 ~ 2023.04.02</span>
<span class="abs" style="left:166px;top:228px;white-space:nowrap;font-size:14px;line-height:14px;letter-spacing:-.72px;word-spacing:1.500px;margin-top:.5px;color:#f21a1a">2.95</span>
<span class="abs" style="left:225px;top:228px;white-space:nowrap;font-size:14px;line-height:14px;letter-spacing:-.72px;word-spacing:1.500px;margin-top:.5px;color:#f21a1a">0.09</span>
<span class="abs" style="left:285px;top:228px;white-space:nowrap;font-size:14px;line-height:14px;letter-spacing:-.72px;word-spacing:1.500px;margin-top:.5px;color:#f21a1a">196</span>
<span class="abs" style="left:345px;top:228px;white-space:nowrap;font-size:14px;line-height:14px;letter-spacing:-.72px;word-spacing:1.500px;margin-top:.5px;color:#f21a1a">573.50</span>
<span class="abs" style="left:425px;top:228px;white-space:nowrap;font-size:14px;line-height:14px;letter-spacing:-.72px;word-spacing:1.500px;margin-top:.5px;color:#f21a1a">2.48 %</span>
<span class="abs" style="left:495px;top:228px;white-space:nowrap;font-size:14px;line-height:14px;letter-spacing:-.72px;word-spacing:1.500px;margin-top:.5px;color:#bcc8dc">0.00</span>
<span class="abs" style="left:565px;top:228px;white-space:nowrap;font-size:14px;line-height:14px;letter-spacing:-.72px;word-spacing:1.500px;margin-top:.5px;color:#bcc8dc">23712.18</span>
<span class="abs" style="left:655px;top:228px;white-space:nowrap;font-size:14px;line-height:14px;letter-spacing:-.72px;word-spacing:1.500px;margin-top:.5px;color:#bcc8dc">0.00</span>
<span class="abs" style="left:745px;top:228px;white-space:nowrap;font-size:14px;line-height:14px;letter-spacing:-.72px;word-spacing:1.500px;margin-top:.5px;color:#bcc8dc">0.00 %</span>
<span class="abs" style="left:825px;top:228px;white-space:nowrap;font-size:14px;line-height:14px;letter-spacing:-.72px;word-spacing:1.500px;margin-top:.5px;color:#bcc8dc">0</span>
<span class="abs" style="left:5px;top:242px;white-space:nowrap;font-size:14px;line-height:14px;letter-spacing:-.72px;word-spacing:1.500px;margin-top:.5px;color:#b4c6e0">2023.03.20 ~ 2023.03.26</span>
<span class="abs" style="left:166px;top:242px;white-space:nowrap;font-size:14px;line-height:14px;letter-spacing:-.72px;word-spacing:1.500px;margin-top:.5px;color:#f21a1a">12.39</span>
<span class="abs" style="left:225px;top:242px;white-space:nowrap;font-size:14px;line-height:14px;letter-spacing:-.72px;word-spacing:1.500px;margin-top:.5px;color:#f21a1a">1.01</span>
<span class="abs" style="left:285px;top:242px;white-space:nowrap;font-size:14px;line-height:14px;letter-spacing:-.72px;word-spacing:1.500px;margin-top:.5px;color:#f21a1a">345</span>
<span class="abs" style="left:345px;top:242px;white-space:nowrap;font-size:14px;line-height:14px;letter-spacing:-.72px;word-spacing:1.500px;margin-top:.5px;color:#f21a1a">1971.98</span>
<span class="abs" style="left:425px;top:242px;white-space:nowrap;font-size:14px;line-height:14px;letter-spacing:-.72px;word-spacing:1.500px;margin-top:.5px;color:#f21a1a">9.32 %</span>
<span class="abs" style="left:495px;top:242px;white-space:nowrap;font-size:14px;line-height:14px;letter-spacing:-.72px;word-spacing:1.500px;margin-top:.5px;color:#bcc8dc">0.00</span>
<span class="abs" style="left:565px;top:242px;white-space:nowrap;font-size:14px;line-height:14px;letter-spacing:-.72px;word-spacing:1.500px;margin-top:.5px;color:#bcc8dc">23138.68</span>
<span class="abs" style="left:655px;top:242px;white-space:nowrap;font-size:14px;line-height:14px;letter-spacing:-.72px;word-spacing:1.500px;margin-top:.5px;color:#bcc8dc">0.00</span>
<span class="abs" style="left:745px;top:242px;white-space:nowrap;font-size:14px;line-height:14px;letter-spacing:-.72px;word-spacing:1.500px;margin-top:.5px;color:#bcc8dc">0.00 %</span>
<span class="abs" style="left:825px;top:242px;white-space:nowrap;font-size:14px;line-height:14px;letter-spacing:-.72px;word-spacing:1.500px;margin-top:.5px;color:#bcc8dc">0</span>
<span class="abs" style="left:5px;top:256px;white-space:nowrap;font-size:14px;line-height:14px;letter-spacing:-.72px;word-spacing:1.500px;margin-top:.5px;color:#b4c6e0">2023.03.13 ~ 2023.03.19</span>
<span class="abs" style="left:166px;top:256px;white-space:nowrap;font-size:14px;line-height:14px;letter-spacing:-.72px;word-spacing:1.500px;margin-top:.5px;color:#f21a1a">8.34</span>
<span class="abs" style="left:225px;top:256px;white-space:nowrap;font-size:14px;line-height:14px;letter-spacing:-.72px;word-spacing:1.500px;margin-top:.5px;color:#f21a1a">0.14</span>
<span class="abs" style="left:285px;top:256px;white-space:nowrap;font-size:14px;line-height:14px;letter-spacing:-.72px;word-spacing:1.500px;margin-top:.5px;color:#f21a1a">529</span>
<span class="abs" style="left:345px;top:256px;white-space:nowrap;font-size:14px;line-height:14px;letter-spacing:-.72px;word-spacing:1.500px;margin-top:.5px;color:#f21a1a">1007.34</span>
<span class="abs" style="left:425px;top:256px;white-space:nowrap;font-size:14px;line-height:14px;letter-spacing:-.72px;word-spacing:1.500px;margin-top:.5px;color:#f21a1a">5.00 %</span>
<span class="abs" style="left:495px;top:256px;white-space:nowrap;font-size:14px;line-height:14px;letter-spacing:-.72px;word-spacing:1.500px;margin-top:.5px;color:#bcc8dc">0.00</span>
<span class="abs" style="left:565px;top:256px;white-space:nowrap;font-size:14px;line-height:14px;letter-spacing:-.72px;word-spacing:1.500px;margin-top:.5px;color:#bcc8dc">21166.70</span>
<span class="abs" style="left:655px;top:256px;white-space:nowrap;font-size:14px;line-height:14px;letter-spacing:-.72px;word-spacing:1.500px;margin-top:.5px;color:#bcc8dc">0.00</span>
<span class="abs" style="left:745px;top:256px;white-space:nowrap;font-size:14px;line-height:14px;letter-spacing:-.72px;word-spacing:1.500px;margin-top:.5px;color:#bcc8dc">0.00 %</span>
<span class="abs" style="left:825px;top:256px;white-space:nowrap;font-size:14px;line-height:14px;letter-spacing:-.72px;word-spacing:1.500px;margin-top:.5px;color:#bcc8dc">0</span>
<span class="abs" style="left:5px;top:270px;white-space:nowrap;font-size:14px;line-height:14px;letter-spacing:-.72px;word-spacing:1.500px;margin-top:.5px;color:#b4c6e0">2023.03.06 ~ 2023.03.12</span>
<span class="abs" style="left:166px;top:270px;white-space:nowrap;font-size:14px;line-height:14px;letter-spacing:-.72px;word-spacing:1.500px;margin-top:.5px;color:#f21a1a">9.79</span>
<span class="abs" style="left:225px;top:270px;white-space:nowrap;font-size:14px;line-height:14px;letter-spacing:-.72px;word-spacing:1.500px;margin-top:.5px;color:#f21a1a">0.88</span>
<span class="abs" style="left:285px;top:270px;white-space:nowrap;font-size:14px;line-height:14px;letter-spacing:-.72px;word-spacing:1.500px;margin-top:.5px;color:#f21a1a">203</span>
<span class="abs" style="left:345px;top:270px;white-space:nowrap;font-size:14px;line-height:14px;letter-spacing:-.72px;word-spacing:1.500px;margin-top:.5px;color:#f21a1a">309.15</span>
<span class="abs" style="left:425px;top:270px;white-space:nowrap;font-size:14px;line-height:14px;letter-spacing:-.72px;word-spacing:1.500px;margin-top:.5px;color:#f21a1a">1.56 %</span>
<span class="abs" style="left:495px;top:270px;white-space:nowrap;font-size:14px;line-height:14px;letter-spacing:-.72px;word-spacing:1.500px;margin-top:.5px;color:#bcc8dc">0.00</span>
<span class="abs" style="left:565px;top:270px;white-space:nowrap;font-size:14px;line-height:14px;letter-spacing:-.72px;word-spacing:1.500px;margin-top:.5px;color:#bcc8dc">20159.36</span>
<span class="abs" style="left:655px;top:270px;white-space:nowrap;font-size:14px;line-height:14px;letter-spacing:-.72px;word-spacing:1.500px;margin-top:.5px;color:#bcc8dc">0.00</span>
<span class="abs" style="left:745px;top:270px;white-space:nowrap;font-size:14px;line-height:14px;letter-spacing:-.72px;word-spacing:1.500px;margin-top:.5px;color:#bcc8dc">0.00 %</span>
<span class="abs" style="left:825px;top:270px;white-space:nowrap;font-size:14px;line-height:14px;letter-spacing:-.72px;word-spacing:1.500px;margin-top:.5px;color:#bcc8dc">0</span>
<span class="abs" style="left:5px;top:284px;white-space:nowrap;font-size:14px;line-height:14px;letter-spacing:-.72px;word-spacing:1.500px;margin-top:.5px;color:#b4c6e0">2023.02.27 ~ 2023.03.05</span>
<span class="abs" style="left:166px;top:284px;white-space:nowrap;font-size:14px;line-height:14px;letter-spacing:-.72px;word-spacing:1.500px;margin-top:.5px;color:#f21a1a">3.35</span>
<span class="abs" style="left:225px;top:284px;white-space:nowrap;font-size:14px;line-height:14px;letter-spacing:-.72px;word-spacing:1.500px;margin-top:.5px;color:#f21a1a">0.05</span>
<span class="abs" style="left:285px;top:284px;white-space:nowrap;font-size:14px;line-height:14px;letter-spacing:-.72px;word-spacing:1.500px;margin-top:.5px;color:#f21a1a">239</span>
<span class="abs" style="left:345px;top:284px;white-space:nowrap;font-size:14px;line-height:14px;letter-spacing:-.72px;word-spacing:1.500px;margin-top:.5px;color:#f21a1a">354.70</span>
<span class="abs" style="left:425px;top:284px;white-space:nowrap;font-size:14px;line-height:14px;letter-spacing:-.72px;word-spacing:1.500px;margin-top:.5px;color:#f21a1a">1.82 %</span>
<span class="abs" style="left:495px;top:284px;white-space:nowrap;font-size:14px;line-height:14px;letter-spacing:-.72px;word-spacing:1.500px;margin-top:.5px;color:#bcc8dc">0.00</span>
<span class="abs" style="left:565px;top:284px;white-space:nowrap;font-size:14px;line-height:14px;letter-spacing:-.72px;word-spacing:1.500px;margin-top:.5px;color:#bcc8dc">19850.21</span>
<span class="abs" style="left:655px;top:284px;white-space:nowrap;font-size:14px;line-height:14px;letter-spacing:-.72px;word-spacing:1.500px;margin-top:.5px;color:#bcc8dc">0.00</span>
<span class="abs" style="left:745px;top:284px;white-space:nowrap;font-size:14px;line-height:14px;letter-spacing:-.72px;word-spacing:1.500px;margin-top:.5px;color:#bcc8dc">0.00 %</span>
<span class="abs" style="left:825px;top:284px;white-space:nowrap;font-size:14px;line-height:14px;letter-spacing:-.72px;word-spacing:1.500px;margin-top:.5px;color:#bcc8dc">0</span>
<span class="abs" style="left:5px;top:298px;white-space:nowrap;font-size:14px;line-height:14px;letter-spacing:-.72px;word-spacing:1.500px;margin-top:.5px;color:#b4c6e0">2023.02.20 ~ 2023.02.26</span>
<span class="abs" style="left:166px;top:298px;white-space:nowrap;font-size:14px;line-height:14px;letter-spacing:-.72px;word-spacing:1.500px;margin-top:.5px;color:#f21a1a">3.05</span>
<span class="abs" style="left:225px;top:298px;white-space:nowrap;font-size:14px;line-height:14px;letter-spacing:-.72px;word-spacing:1.500px;margin-top:.5px;color:#f21a1a">0.05</span>
<span class="abs" style="left:285px;top:298px;white-space:nowrap;font-size:14px;line-height:14px;letter-spacing:-.72px;word-spacing:1.500px;margin-top:.5px;color:#f21a1a">224</span>
<span class="abs" style="left:345px;top:298px;white-space:nowrap;font-size:14px;line-height:14px;letter-spacing:-.72px;word-spacing:1.500px;margin-top:.5px;color:#f21a1a">366.60</span>
<span class="abs" style="left:425px;top:298px;white-space:nowrap;font-size:14px;line-height:14px;letter-spacing:-.72px;word-spacing:1.500px;margin-top:.5px;color:#f21a1a">1.92 %</span>
<span class="abs" style="left:495px;top:298px;white-space:nowrap;font-size:14px;line-height:14px;letter-spacing:-.72px;word-spacing:1.500px;margin-top:.5px;color:#bcc8dc">0.00</span>
<span class="abs" style="left:565px;top:298px;white-space:nowrap;font-size:14px;line-height:14px;letter-spacing:-.72px;word-spacing:1.500px;margin-top:.5px;color:#bcc8dc">19495.51</span>
<span class="abs" style="left:655px;top:298px;white-space:nowrap;font-size:14px;line-height:14px;letter-spacing:-.72px;word-spacing:1.500px;margin-top:.5px;color:#bcc8dc">0.00</span>
<span class="abs" style="left:745px;top:298px;white-space:nowrap;font-size:14px;line-height:14px;letter-spacing:-.72px;word-spacing:1.500px;margin-top:.5px;color:#bcc8dc">0.00 %</span>
<span class="abs" style="left:825px;top:298px;white-space:nowrap;font-size:14px;line-height:14px;letter-spacing:-.72px;word-spacing:1.500px;margin-top:.5px;color:#bcc8dc">0</span>
<span class="abs" style="left:5px;top:312px;white-space:nowrap;font-size:14px;line-height:14px;letter-spacing:-.72px;word-spacing:1.500px;margin-top:.5px;color:#b4c6e0">2023.02.13 ~ 2023.02.19</span>
<span class="abs" style="left:166px;top:312px;white-space:nowrap;font-size:14px;line-height:14px;letter-spacing:-.72px;word-spacing:1.500px;margin-top:.5px;color:#f21a1a">4.29</span>
<span class="abs" style="left:225px;top:312px;white-space:nowrap;font-size:14px;line-height:14px;letter-spacing:-.72px;word-spacing:1.500px;margin-top:.5px;color:#f21a1a">0.05</span>
<span class="abs" style="left:285px;top:312px;white-space:nowrap;font-size:14px;line-height:14px;letter-spacing:-.72px;word-spacing:1.500px;margin-top:.5px;color:#f21a1a">292</span>
<span class="abs" style="left:345px;top:312px;white-space:nowrap;font-size:14px;line-height:14px;letter-spacing:-.72px;word-spacing:1.500px;margin-top:.5px;color:#f21a1a">564.50</span>
<span class="abs" style="left:425px;top:312px;white-space:nowrap;font-size:14px;line-height:14px;letter-spacing:-.72px;word-spacing:1.500px;margin-top:.5px;color:#f21a1a">3.04 %</span>
<span class="abs" style="left:495px;top:312px;white-space:nowrap;font-size:14px;line-height:14px;letter-spacing:-.72px;word-spacing:1.500px;margin-top:.5px;color:#bcc8dc">0.00</span>
<span class="abs" style="left:565px;top:312px;white-space:nowrap;font-size:14px;line-height:14px;letter-spacing:-.72px;word-spacing:1.500px;margin-top:.5px;color:#bcc8dc">19128.91</span>
<span class="abs" style="left:655px;top:312px;white-space:nowrap;font-size:14px;line-height:14px;letter-spacing:-.72px;word-spacing:1.500px;margin-top:.5px;color:#bcc8dc">0.00</span>
<span class="abs" style="left:745px;top:312px;white-space:nowrap;font-size:14px;line-height:14px;letter-spacing:-.72px;word-spacing:1.500px;margin-top:.5px;color:#bcc8dc">0.00 %</span>
<span class="abs" style="left:825px;top:312px;white-space:nowrap;font-size:14px;line-height:14px;letter-spacing:-.72px;word-spacing:1.500px;margin-top:.5px;color:#bcc8dc">0</span>
<span class="abs" style="left:5px;top:327px;white-space:nowrap;font-size:14px;line-height:14px;letter-spacing:-.72px;word-spacing:1.500px;margin-top:.5px;font-size:14px;line-height:16px;color:#c4c8cc;font-weight:300;letter-spacing:1.900px;top:325px">合计</span>
<span class="abs" style="left:166px;top:327px;white-space:nowrap;font-size:14px;line-height:14px;letter-spacing:-.72px;word-spacing:1.500px;margin-top:.5px;color:#f21a1a">57.09</span>
<span class="abs" style="left:345px;top:327px;white-space:nowrap;font-size:14px;line-height:14px;letter-spacing:-.72px;word-spacing:1.500px;margin-top:.5px;color:#f21a1a">7684.19</span>
<span class="abs" style="left:425px;top:327px;white-space:nowrap;font-size:14px;line-height:14px;letter-spacing:-.72px;word-spacing:1.500px;margin-top:.5px;color:#f21a1a">41.39 %</span>
<span class="abs" style="left:495px;top:327px;white-space:nowrap;font-size:14px;line-height:14px;letter-spacing:-.72px;word-spacing:1.500px;margin-top:.5px;color:#bcc8dc">0.00</span>
<span class="abs" style="left:655px;top:327px;white-space:nowrap;font-size:14px;line-height:14px;letter-spacing:-.72px;word-spacing:1.500px;margin-top:.5px;color:#00f060">-316.21</span>
<span class="abs" style="left:745px;top:327px;white-space:nowrap;font-size:14px;line-height:14px;letter-spacing:-.72px;word-spacing:1.500px;margin-top:.5px;color:#00f060">-1.23 %</span>
<span class="abs" style="left:825px;top:327px;white-space:nowrap;font-size:14px;line-height:14px;letter-spacing:-.72px;word-spacing:1.500px;margin-top:.5px;color:#bcc8dc">0</span>
</div>
<div class="abs" style="left:362px;top:188px;width:67px;height:185px;border:3px solid #1fa91f;border-radius:4px"></div>
</div>
<!--CHART-->
<div class="abs" style="left:0;top:422px;width:1269px;height:399px;background:#f5f5f5"></div><div class="abs" style="left:268px;top:421px;width:1001px;height:1px;background:#f5f5f5"></div>
<div class="abs" style="left:0;top:444px;width:13px;height:33px;background:#d6eef5"></div>
<div class="abs" style="left:0;top:477px;width:13px;height:333px;background:#c8d7e6"></div>
<div class="abs" style="left:0;top:810px;width:13px;height:11px;background:#b2cae5"></div>
<svg class="abs" style="left:0;top:428px" width="12" height="12"><path d="M.5 2.500L7.500 9.500M7.500 2.500L.5 9.500" stroke="#000" stroke-width="1.400"/></svg>
<div class="abs" style="left:0;top:815px;font-size:13px;line-height:13px;color:#000">调</div>
<div class="abs" style="left:14px;top:805px;width:1255px;height:16px;background:#f8f8f8"></div>
<div id="tt">
<div class="row hdr" style="top:0"><span style="left:6px;text-align:left">订单</span><span style="left:107px;width:185px;padding-right:4px;">时间</span><span style="left:292px;width:85px;padding-right:5px;">类型</span><span style="left:377px;width:67px;padding-right:5px;">手数</span><span style="left:528px;width:84px;padding-right:5px;">价格</span><span style="left:612px;width:84px;padding-right:4px;">止损</span><span style="left:696px;width:84px;padding-right:4px;">止盈</span><span style="left:780px;width:184px;padding-right:5px;">时间</span><span style="left:964px;width:85px;padding-right:5px;">价格</span><span style="left:1049px;width:84px;padding-right:5px;">库存费</span><span style="left:1133px;width:99px;padding-right:6px;">获利</span><span style="left:444px;width:84px;text-align:left;padding-left:16px;letter-spacing:.8px">交易...</span><span style="left:515px;font-size:8px;color:#888;top:0px">⁄</span></div>
<div class="row odd" style="top:27px"><span style="left:27px;text-align:left;letter-spacing:.85px">26461309</span><span style="left:107px;width:185px;padding-right:3px;">2023.04.21 17:00:16</span><span style="left:292px;width:85px;padding-right:4px;">sell</span><span style="left:377px;width:67px;padding-right:4px;">0.01</span><span style="left:444px;width:84px;padding-right:4px;">xauusd</span><span style="left:528px;width:84px;padding-right:4px;">1972.93</span><span style="left:613px;width:81px;padding-right:2px;background:#ffa0a0;height:23px">1980.83</span><span style="left:697px;width:81px;padding-right:2px;">1979.87</span><span style="left:780px;width:184px;padding-right:4px;">2023.04.21 17:34:55</span><span style="left:964px;width:85px;padding-right:4px;">1980.83</span><span style="left:1049px;width:84px;padding-right:4px;">0.00</span><span style="left:1133px;width:99px;padding-right:5px;">-7.90</span></div>
<div class="row" style="top:52px"><span style="left:27px;text-align:left;letter-spacing:.85px">26461719</span><span style="left:107px;width:185px;padding-right:3px;">2023.04.21 17:08:34</span><span style="left:292px;width:85px;padding-right:4px;">sell</span><span style="left:377px;width:67px;padding-right:4px;">0.01</span><span style="left:444px;width:84px;padding-right:4px;">xauusd</span><span style="left:528px;width:84px;padding-right:4px;">1975.15</span><span style="left:613px;width:81px;padding-right:2px;background:#ffa0a0;height:23px">1980.83</span><span style="left:697px;width:81px;padding-right:2px;">1979.87</span><span style="left:780px;width:184px;padding-right:4px;">2023.04.21 17:34:55</span><span style="left:964px;width:85px;padding-right:4px;">1980.83</span><span style="left:1049px;width:84px;padding-right:4px;">0.00</span><span style="left:1133px;width:99px;padding-right:5px;">-5.68</span></div>
<div class="row odd" style="top:77px"><span style="left:27px;text-align:left;letter-spacing:.85px">26461882</span><span style="left:107px;width:185px;padding-right:3px;">2023.04.21 17:13:18</span><span style="left:292px;width:85px;padding-right:4px;">sell</span><span style="left:377px;width:67px;padding-right:4px;">0.01</span><span style="left:444px;width:84px;padding-right:4px;">xauusd</span><span style="left:528px;width:84px;padding-right:4px;">1977.26</span><span style="left:613px;width:81px;padding-right:2px;background:#ffa0a0;height:23px">1980.83</span><span style="left:697px;width:81px;padding-right:2px;">1979.87</span><span style="left:780px;width:184px;padding-right:4px;">2023.04.21 17:34:55</span><span style="left:964px;width:85px;padding-right:4px;">1980.83</span><span style="left:1049px;width:84px;padding-right:4px;">0.00</span><span style="left:1133px;width:99px;padding-right:5px;">-3.57</span></div>
<div class="row" style="top:102px"><span style="left:27px;text-align:left;letter-spacing:.85px">26461913</span><span style="left:107px;width:185px;padding-right:3px;">2023.04.21 17:14:11</span><span style="left:292px;width:85px;padding-right:4px;">sell</span><span style="left:377px;width:67px;padding-right:4px;">0.02</span><span style="left:444px;width:84px;padding-right:4px;">xauusd</span><span style="left:528px;width:84px;padding-right:4px;">1979.26</span><span style="left:613px;width:81px;padding-right:2px;background:#ffa0a0;height:23px">1980.83</span><span style="left:697px;width:81px;padding-right:2px;">1979.87</span><span style="left:780px;width:184px;padding-right:4px;">2023.04.21 17:34:55</span><span style="left:964px;width:85px;padding-right:4px;">1980.83</span><span style="left:1049px;width:84px;padding-right:4px;">0.00</span><span style="left:1133px;width:99px;padding-right:5px;">-3.14</span></div>
<div class="row odd" style="top:127px"><span style="left:27px;text-align:left;letter-spacing:.85px">26462014</span><span style="left:107px;width:185px;padding-right:3px;">2023.04.21 17:17:50</span><span style="left:292px;width:85px;padding-right:4px;">sell</span><span style="left:377px;width:67px;padding-right:4px;">0.02</span><span style="left:444px;width:84px;padding-right:4px;">xauusd</span><span style="left:528px;width:84px;padding-right:4px;">1981.32</span><span style="left:613px;width:81px;padding-right:2px;background:#ffa0a0;height:23px">1980.83</span><span style="left:697px;width:81px;padding-right:2px;">1979.87</span><span style="left:780px;width:184px;padding-right:4px;">2023.04.21 17:34:55</span><span style="left:964px;width:85px;padding-right:4px;">1980.83</span><span style="left:1049px;width:84px;padding-right:4px;">0.00</span><span style="left:1133px;width:99px;padding-right:5px;">0.98</span></div>
<div class="row" style="top:152px"><span style="left:27px;text-align:left;letter-spacing:.85px">26462088</span><span style="left:107px;width:185px;padding-right:3px;">2023.04.21 17:19:23</span><span style="left:292px;width:85px;padding-right:4px;">sell</span><span style="left:377px;width:67px;padding-right:4px;">0.02</span><span style="left:444px;width:84px;padding-right:4px;">xauusd</span><span style="left:528px;width:84px;padding-right:4px;">1983.32</span><span style="left:613px;width:81px;padding-right:2px;background:#ffa0a0;height:23px">1980.83</span><span style="left:697px;width:81px;padding-right:2px;">1979.87</span><span style="left:780px;width:184px;padding-right:4px;">2023.04.21 17:34:55</span><span style="left:964px;width:85px;padding-right:4px;">1980.83</span><span style="left:1049px;width:84px;padding-right:4px;">0.00</span><span style="left:1133px;width:99px;padding-right:5px;">4.98</span></div>
<div class="row odd" style="top:177px"><span style="left:27px;text-align:left;letter-spacing:.85px">26462308</span><span style="left:107px;width:185px;padding-right:3px;">2023.04.21 17:24:09</span><span style="left:292px;width:85px;padding-right:4px;">sell</span><span style="left:377px;width:67px;padding-right:4px;">0.03</span><span style="left:444px;width:84px;padding-right:4px;">xauusd</span><span style="left:528px;width:84px;padding-right:4px;">1985.32</span><span style="left:613px;width:81px;padding-right:2px;background:#ffa0a0;height:23px">1980.83</span><span style="left:697px;width:81px;padding-right:2px;">1979.87</span><span style="left:780px;width:184px;padding-right:4px;">2023.04.21 17:34:55</span><span style="left:964px;width:85px;padding-right:4px;">1980.83</span><span style="left:1049px;width:84px;padding-right:4px;">0.00</span><span style="left:1133px;width:99px;padding-right:5px;">13.47</span></div>
<div class="row" style="top:202px"><span style="left:27px;text-align:left;letter-spacing:.85px">26462369</span><span style="left:107px;width:185px;padding-right:3px;">2023.04.21 17:24:42</span><span style="left:292px;width:85px;padding-right:4px;">sell</span><span style="left:377px;width:67px;padding-right:4px;">0.04</span><span style="left:444px;width:84px;padding-right:4px;">xauusd</span><span style="left:528px;width:84px;padding-right:4px;">1987.20</span><span style="left:613px;width:81px;padding-right:2px;background:#ffa0a0;height:23px">1980.78</span><span style="left:697px;width:81px;padding-right:2px;">1979.87</span><span style="left:780px;width:184px;padding-right:4px;">2023.04.21 17:34:54</span><span style="left:964px;width:85px;padding-right:4px;">1980.78</span><span style="left:1049px;width:84px;padding-right:4px;">0.00</span><span style="left:1133px;width:99px;padding-right:5px;">25.68</span></div>
<div class="row odd" style="top:227px"><span style="left:27px;text-align:left;letter-spacing:.85px">26462631</span><span style="left:107px;width:185px;padding-right:3px;">2023.04.21 17:34:57</span><span style="left:292px;width:85px;padding-right:4px;">sell</span><span style="left:377px;width:67px;padding-right:4px;">0.01</span><span style="left:444px;width:84px;padding-right:4px;">xauusd</span><span style="left:528px;width:84px;padding-right:4px;">1980.60</span><span style="left:613px;width:81px;padding-right:2px;">1978.65</span><span style="left:697px;width:81px;padding-right:2px;background:#60f060;height:23px">1978.10</span><span style="left:780px;width:184px;padding-right:4px;">2023.04.21 17:39:53</span><span style="left:964px;width:85px;padding-right:4px;">1978.10</span><span style="left:1049px;width:84px;padding-right:4px;">0.00</span><span style="left:1133px;width:99px;padding-right:5px;">2.50</span></div>
<div class="row" style="top:252px"><span style="left:27px;text-align:left;letter-spacing:.85px">26462708</span><span style="left:107px;width:185px;padding-right:3px;">2023.04.21 17:39:55</span><span style="left:292px;width:85px;padding-right:4px;">sell</span><span style="left:377px;width:67px;padding-right:4px;">0.01</span><span style="left:444px;width:84px;padding-right:4px;">xauusd</span><span style="left:528px;width:84px;padding-right:4px;">1978.05</span><span style="left:613px;width:81px;padding-right:2px;background:#ffa0a0;height:23px">1977.19</span><span style="left:697px;width:81px;padding-right:2px;">1975.55</span><span style="left:780px;width:184px;padding-right:4px;">2023.04.21 17:50:17</span><span style="left:964px;width:85px;padding-right:4px;">1977.19</span><span style="left:1049px;width:84px;padding-right:4px;">0.00</span><span style="left:1133px;width:99px;padding-right:5px;">0.86</span></div>
<div class="row odd" style="top:277px"><span style="left:27px;text-align:left;letter-spacing:.85px">26462969</span><span style="left:107px;width:185px;padding-right:3px;">2023.04.21 17:46:25</span><span style="left:292px;width:85px;padding-right:4px;">sell</span><span style="left:377px;width:67px;padding-right:4px;">0.01</span><span style="left:444px;width:84px;padding-right:4px;">xauusd</span><span style="left:528px;width:84px;padding-right:4px;">1980.20</span><span style="left:613px;width:81px;padding-right:2px;background:#ffa0a0;height:23px">1977.44</span><span style="left:697px;width:81px;padding-right:2px;">1976.63</span><span style="left:780px;width:184px;padding-right:4px;">2023.04.21 17:49:49</span><span style="left:964px;width:85px;padding-right:4px;">1977.44</span><span style="left:1049px;width:84px;padding-right:4px;">0.00</span><span style="left:1133px;width:99px;padding-right:5px;">2.76</span></div>
<div class="row" style="top:302px"><span style="left:27px;text-align:left;letter-spacing:.85px">26463137</span><span style="left:107px;width:185px;padding-right:3px;">2023.04.21 17:50:18</span><span style="left:292px;width:85px;padding-right:4px;">sell</span><span style="left:377px;width:67px;padding-right:4px;">0.01</span><span style="left:444px;width:84px;padding-right:4px;">xauusd</span><span style="left:528px;width:84px;padding-right:4px;">1977.09</span><span style="left:613px;width:81px;padding-right:2px;">1976.27</span><span style="left:697px;width:81px;padding-right:2px;background:#60f060;height:23px">1975.64</span><span style="left:780px;width:184px;padding-right:4px;">2023.04.21 18:42:44</span><span style="left:964px;width:85px;padding-right:4px;">1975.64</span><span style="left:1049px;width:84px;padding-right:4px;">0.00</span><span style="left:1133px;width:99px;padding-right:5px;">1.45</span></div>
<div class="row odd" style="top:327px"><span style="left:27px;text-align:left;letter-spacing:.85px">26463248</span><span style="left:107px;width:185px;padding-right:3px;">2023.04.21 17:55:59</span><span style="left:292px;width:85px;padding-right:4px;">sell</span><span style="left:377px;width:67px;padding-right:4px;">0.01</span><span style="left:444px;width:84px;padding-right:4px;">xauusd</span><span style="left:528px;width:84px;padding-right:4px;">1979.18</span><span style="left:613px;width:81px;padding-right:2px;">1976.27</span><span style="left:697px;width:81px;padding-right:2px;background:#60f060;height:23px">1975.64</span><span style="left:780px;width:184px;padding-right:4px;">2023.04.21 18:42:44</span><span style="left:964px;width:85px;padding-right:4px;">1975.64</span><span style="left:1049px;width:84px;padding-right:4px;">0.00</span><span style="left:1133px;width:99px;padding-right:5px;">3.54</span></div>
<div class="vl" style="left:107px"></div>
<div class="hvl" style="left:108px"></div>
<div class="vl" style="left:292px"></div>
<div class="hvl" style="left:293px"></div>
<div class="vl" style="left:376px"></div>
<div class="hvl" style="left:377px"></div>
<div class="vl" style="left:443px"></div>
<div class="hvl" style="left:444px"></div>
<div class="vl" style="left:527px"></div>
<div class="hvl" style="left:528px"></div>
<div class="vl" style="left:611px"></div>
<div class="hvl" style="left:612px"></div>
<div class="vl" style="left:695px"></div>
<div class="hvl" style="left:696px"></div>
<div class="vl" style="left:779px"></div>
<div class="hvl" style="left:780px"></div>
<div class="vl" style="left:964px"></div>
<div class="hvl" style="left:965px"></div>
<div class="vl" style="left:1048px"></div>
<div class="hvl" style="left:1049px"></div>
<div class="vl" style="left:1132px"></div>
<div class="hvl" style="left:1133px"></div>
<div class="hvl" style="left:1231px"></div>
<svg class="abs" style="left:2px;top:27px" width="20" height="325" viewBox="0 0 20 325"><defs><radialGradient id="rb" cx=".4" cy=".35" r=".7"><stop offset="0" stop-color="#ff8a50"/><stop offset=".6" stop-color="#e83808"/><stop offset="1" stop-color="#b82000"/></radialGradient></defs><g transform="translate(0,0)"><path d="M2.200 5.800Q2.200 4.800 3.200 4.800H12L16.400 9.200V19.700Q16.400 20.700 15.400 20.700H3.200Q2.200 20.700 2.200 19.700Z" fill="#fbfbfb" stroke="#6e6e6e" stroke-width="1.300"/><path d="M12 4.800V9.200H16.400" fill="#e4e4e4" stroke="#7e7e7e" stroke-width="1"/><circle cx="15" cy="18" r="4.500" fill="url(#rb)"/></g><g transform="translate(0,25)"><path d="M2.200 5.800Q2.200 4.800 3.200 4.800H12L16.400 9.200V19.700Q16.400 20.700 15.400 20.700H3.200Q2.200 20.700 2.200 19.700Z" fill="#fbfbfb" stroke="#6e6e6e" stroke-width="1.300"/><path d="M12 4.800V9.200H16.400" fill="#e4e4e4" stroke="#7e7e7e" stroke-width="1"/><circle cx="15" cy="18" r="4.500" fill="url(#rb)"/></g><g transform="translate(0,50)"><path d="M2.200 5.800Q2.200 4.800 3.200 4.800H12L16.400 9.200V19.700Q16.400 20.700 15.400 20.700H3.200Q2.200 20.700 2.200 19.700Z" fill="#fbfbfb" stroke="#6e6e6e" stroke-width="1.300"/><path d="M12 4.800V9.200H16.400" fill="#e4e4e4" stroke="#7e7e7e" stroke-width="1"/><circle cx="15" cy="18" r="4.500" fill="url(#rb)"/></g><g transform="translate(0,75)"><path d="M2.200 5.800Q2.200 4.800 3.200 4.800H12L16.400 9.200V19.700Q16.400 20.700 15.400 20.700H3.200Q2.200 20.700 2.200 19.700Z" fill="#fbfbfb" stroke="#6e6e6e" stroke-width="1.300"/><path d="M12 4.800V9.200H16.400" fill="#e4e4e4" stroke="#7e7e7e" stroke-width="1"/><circle cx="15" cy="18" r="4.500" fill="url(#rb)"/></g><g transform="translate(0,100)"><path d="M2.200 5.800Q2.200 4.800 3.200 4.800H12L16.400 9.200V19.700Q16.400 20.700 15.400 20.700H3.200Q2.200 20.700 2.200 19.700Z" fill="#fbfbfb" stroke="#6e6e6e" stroke-width="1.300"/><path d="M12 4.800V9.200H16.400" fill="#e4e4e4" stroke="#7e7e7e" stroke-width="1"/><circle cx="15" cy="18" r="4.500" fill="url(#rb)"/></g><g transform="translate(0,125)"><path d="M2.200 5.800Q2.200 4.800 3.200 4.800H12L16.400 9.200V19.700Q16.400 20.700 15.400 20.700H3.200Q2.200 20.700 2.200 19.700Z" fill="#fbfbfb" stroke="#6e6e6e" stroke-width="1.300"/><path d="M12 4.800V9.200H16.400" fill="#e4e4e4" stroke="#7e7e7e" stroke-width="1"/><circle cx="15" cy="18" r="4.500" fill="url(#rb)"/></g><g transform="translate(0,150)"><path d="M2.200 5.800Q2.200 4.800 3.200 4.800H12L16.400 9.200V19.700Q16.400 20.700 15.400 20.700H3.200Q2.200 20.700 2.200 19.700Z" fill="#fbfbfb" stroke="#6e6e6e" stroke-width="1.300"/><path d="M12 4.800V9.200H16.400" fill="#e4e4e4" stroke="#7e7e7e" stroke-width="1"/><circle cx="15" cy="18" r="4.500" fill="url(#rb)"/></g><g transform="translate(0,175)"><path d="M2.200 5.800Q2.200 4.800 3.200 4.800H12L16.400 9.200V19.700Q16.400 20.700 15.400 20.700H3.200Q2.200 20.700 2.200 19.700Z" fill="#fbfbfb" stroke="#6e6e6e" stroke-width="1.300"/><path d="M12 4.800V9.200H16.400" fill="#e4e4e4" stroke="#7e7e7e" stroke-width="1"/><circle cx="15" cy="18" r="4.500" fill="url(#rb)"/></g><g transform="translate(0,200)"><path d="M2.200 5.800Q2.200 4.800 3.200 4.800H12L16.400 9.200V19.700Q16.400 20.700 15.400 20.700H3.200Q2.200 20.700 2.200 19.700Z" fill="#fbfbfb" stroke="#6e6e6e" stroke-width="1.300"/><path d="M12 4.800V9.200H16.400" fill="#e4e4e4" stroke="#7e7e7e" stroke-width="1"/><circle cx="15" cy="18" r="4.500" fill="url(#rb)"/></g><g transform="translate(0,225)"><path d="M2.200 5.800Q2.200 4.800 3.200 4.800H12L16.400 9.200V19.700Q16.400 20.700 15.400 20.700H3.200Q2.200 20.700 2.200 19.700Z" fill="#fbfbfb" stroke="#6e6e6e" stroke-width="1.300"/><path d="M12 4.800V9.200H16.400" fill="#e4e4e4" stroke="#7e7e7e" stroke-width="1"/><circle cx="15" cy="18" r="4.500" fill="url(#rb)"/></g><g transform="translate(0,250)"><path d="M2.200 5.800Q2.200 4.800 3.200 4.800H12L16.400 9.200V19.700Q16.400 20.700 15.400 20.700H3.200Q2.200 20.700 2.200 19.700Z" fill="#fbfbfb" stroke="#6e6e6e" stroke-width="1.300"/><path d="M12 4.800V9.200H16.400" fill="#e4e4e4" stroke="#7e7e7e" stroke-width="1"/><circle cx="15" cy="18" r="4.500" fill="url(#rb)"/></g><g transform="translate(0,275)"><path d="M2.200 5.800Q2.200 4.800 3.200 4.800H12L16.400 9.200V19.700Q16.400 20.700 15.400 20.700H3.200Q2.200 20.700 2.200 19.700Z" fill="#fbfbfb" stroke="#6e6e6e" stroke-width="1.300"/><path d="M12 4.800V9.200H16.400" fill="#e4e4e4" stroke="#7e7e7e" stroke-width="1"/><circle cx="15" cy="18" r="4.500" fill="url(#rb)"/></g><g transform="translate(0,300)"><path d="M2.200 5.800Q2.200 4.800 3.200 4.800H12L16.400 9.200V19.700Q16.400 20.700 15.400 20.700H3.200Q2.200 20.700 2.200 19.700Z" fill="#fbfbfb" stroke="#6e6e6e" stroke-width="1.300"/><path d="M12 4.800V9.200H16.400" fill="#e4e4e4" stroke="#7e7e7e" stroke-width="1"/><circle cx="15" cy="18" r="4.500" fill="url(#rb)"/></g></svg>
<div class="abs" style="left:0;top:351px;width:1232px;height:25px;background:#c8c8c8;font-weight:bold;font-size:15px;line-height:26px;white-space:nowrap;letter-spacing:.2px"><span class="abs" style="left:26px">盈/亏: 7 704.01&nbsp; 信用额: 0.00&nbsp; 存款: 0.00&nbsp; 取款: 0.00</span><span class="abs" style="right:6px">7 704.01</span><svg class="abs" style="left:8px;top:8px" width="10" height="10"><circle cx="5" cy="5" r="3.600" fill="#dcdcdc" stroke="#8a8a8a" stroke-width="1"/><path d="M3 7L7 3" stroke="#8a8a8a" stroke-width="1"/></svg></div>
<div class="abs" style="left:0;top:376px;width:1232px;height:2px;background:#f8f8f8"></div>
</div>
<svg class="abs" style="left:1247px;top:428px" width="22" height="393" viewBox="0 0 22 393"><rect x="0" y="0" width="22" height="393" fill="#f5f5f5"/><path d="M6 13.200L10.500 8.600L15 13.200" stroke="#4c4c58" stroke-width="2" fill="none"/><rect x="1.500" y="349" width="18" height="20" fill="#c8c8c8"/><path d="M6 376.500L10.500 381L15 376.500" stroke="#4c4c58" stroke-width="2" fill="none"/></svg>
<div class="abs" style="left:1247px;top:427px;width:22px;height:1px;background:#a0a0a0"></div>
<div class="abs" style="left:14px;top:819px;width:114px;height:1px;background:#101010"></div>
<div class="abs" style="left:127px;top:819px;width:1px;height:2px;background:#101010"></div>
<div class="abs" style="left:211px;top:819px;width:1058px;height:1px;background:#101010"></div><div class="abs" style="left:211px;top:819px;width:1px;height:2px;background:#101010"></div>
<div class="abs" style="left:980px;top:781px;font-size:25.500px;line-height:32px;color:rgba(110,130,110,.42);white-space:nowrap;letter-spacing:.9px;font-weight:300">激活 Windows</div>
<div class="abs" style="left:980px;top:813px;font-size:17px;line-height:22px;color:rgba(110,130,110,.42);white-space:nowrap;letter-spacing:.6px;font-weight:300">转到“设置”以激活 Windows。</div>
<div class="abs" style="left:622px;top:450px;width:181px;height:324px;border:3px solid #ee1414;border-radius:5px"></div>
<!--TERMINAL-->

</div>
</body>
</html>
